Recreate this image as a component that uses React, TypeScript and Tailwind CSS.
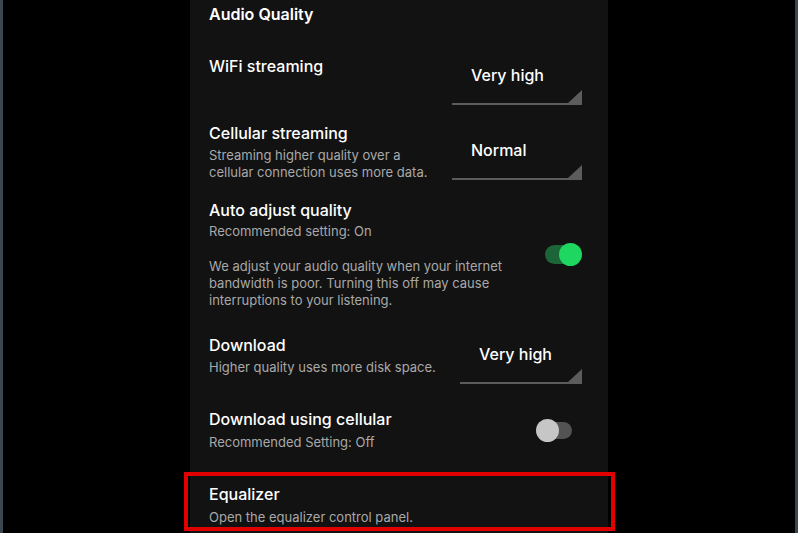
import React from "react";

const font = { fontFamily: "Inter, 'Noto Sans', sans-serif" };

function Dropdown({ label, width, className = "" }: { label: string; width: string; className?: string }) {
  return (
    <div className={`relative h-[40px] border-b-2 border-[#5c5c5c] ${width} ${className}`}>
      <div className="pl-[19px] text-[16px] leading-[20px] font-medium text-white">{label}</div>
      <svg className="absolute right-0 bottom-0" width="14" height="13" viewBox="0 0 14 13">
        <polygon points="14,0 14,13 0,13" fill="#5c5c5c" />
      </svg>
    </div>
  );
}

function Toggle({ on }: { on: boolean }) {
  if (on) {
    return (
      <div className="relative h-[23px] w-[37px]">
        <div className="absolute left-0 top-[2px] h-[19px] w-[30px] rounded-full bg-[#1b6538]" />
        <div className="absolute right-0 top-0 h-[23px] w-[23px] rounded-full bg-[#1ed760]" />
      </div>
    );
  }
  return (
    <div className="relative h-[23px] w-[36px]">
      <div className="absolute right-0 top-[3px] h-[17px] w-[30px] rounded-full bg-[#535353]" />
      <div className="absolute left-0 top-0 h-[23px] w-[23px] rounded-full bg-[#c6c6c6]" />
    </div>
  );
}

function Title({ children }: { children: React.ReactNode }) {
  return <div className="text-[16px] leading-[20px] font-medium text-white">{children}</div>;
}

function Sub({ children, className = "" }: { children: React.ReactNode; className?: string }) {
  return <div className={`text-[13px] leading-[17px] text-[#a9a9a9] ${className}`}>{children}</div>;
}

export default function App() {
  return (
    <div className="flex h-[533px] w-[798px] overflow-hidden bg-black" style={font}>
      <div className="w-[3px] bg-[#3a4751]" />
      <div className="flex flex-1 justify-center">
        <div className="ml-[187px] mr-auto w-[418px] bg-[#121212] pl-[19px] pr-[26px]">
          <div className="pt-[4px] text-[16px] leading-[20px] font-semibold text-white">Audio Quality</div>

          <div className="mt-[32px] flex items-start justify-between">
            <Title>WiFi streaming</Title>
            <Dropdown label="Very high" width="w-[130px]" className="mt-[9px]" />
          </div>

          <div className="mt-[18px] flex items-start justify-between">
            <div>
              <Title>Cellular streaming</Title>
              <Sub className="mt-[4px]">
                Streaming higher quality over a<br />cellular connection uses more data.
              </Sub>
            </div>
            <Dropdown label="Normal" width="w-[130px]" className="mt-[17px]" />
          </div>

          <div className="mt-[19px] flex items-center justify-between">
            <div>
              <Title>Auto adjust quality</Title>
              <Sub className="mt-[3px]">Recommended setting: On</Sub>
              <Sub className="mt-[18px]">
                We adjust your audio quality when your internet
                <br />
                bandwidth is poor. Turning this off may cause
                <br />
                interruptions to your listening.
              </Sub>
            </div>
            <Toggle on />
          </div>

          <div className="mt-[26px] flex items-start justify-between">
            <div>
              <Title>Download</Title>
              <Sub className="mt-[4px]">Higher quality uses more disk space.</Sub>
            </div>
            <Dropdown label="Very high" width="w-[122px]" className="mt-[9px]" />
          </div>

          <div className="mt-[25px] flex items-center justify-between">
            <div>
              <Title>Download using cellular</Title>
              <Sub className="mt-[5px]">Recommended Setting: Off</Sub>
            </div>
            <div className="mr-[10px]">
              <Toggle on={false} />
            </div>
          </div>

          <div className="relative mt-[33px]">
            <Title>Equalizer</Title>
            <Sub className="mt-[5px]">Open the equalizer control panel.</Sub>
            <div className="absolute left-[-25px] top-[-12px] h-[59px] w-[431px] border-[4px] border-[#e00000]" />
          </div>
        </div>
      </div>
      <div className="w-[3px] bg-[#3a4751]" />
    </div>
  );
}
